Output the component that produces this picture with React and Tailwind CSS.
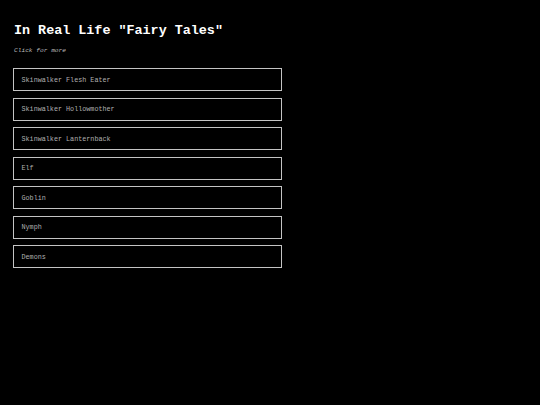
const items = [
  "Skinwalker Flesh Eater",
  "Skinwalker Hollowmother",
  "Skinwalker Lanternback",
  "Elf",
  "Goblin",
  "Nymph",
  "Demons",
];

export default function App() {
  return (
    <div className="min-h-[405px] w-full bg-black px-[13px] pt-[21px] font-['Courier_New','Liberation_Mono',monospace]">
      <h1 className="pl-[1px] text-[13.4px] font-bold leading-[20px] text-white">
        In Real Life "Fairy Tales"
      </h1>
      <p className="mt-[5px] pl-[1px] text-[6.2px] italic leading-[10px] text-[#bdbdbd]">
        Click for more
      </p>
      <ul className="mt-[12px] flex w-[269px] flex-col gap-[6.5px]">
        {items.map((item) => (
          <li
            key={item}
            className="flex h-[23px] items-center border-[1.5px] border-[#c4c4c4] pl-[7.5px] pt-[1px] text-[6.75px] text-[#b0b0b0]"
          >
            {item}
          </li>
        ))}
      </ul>
    </div>
  );
}
